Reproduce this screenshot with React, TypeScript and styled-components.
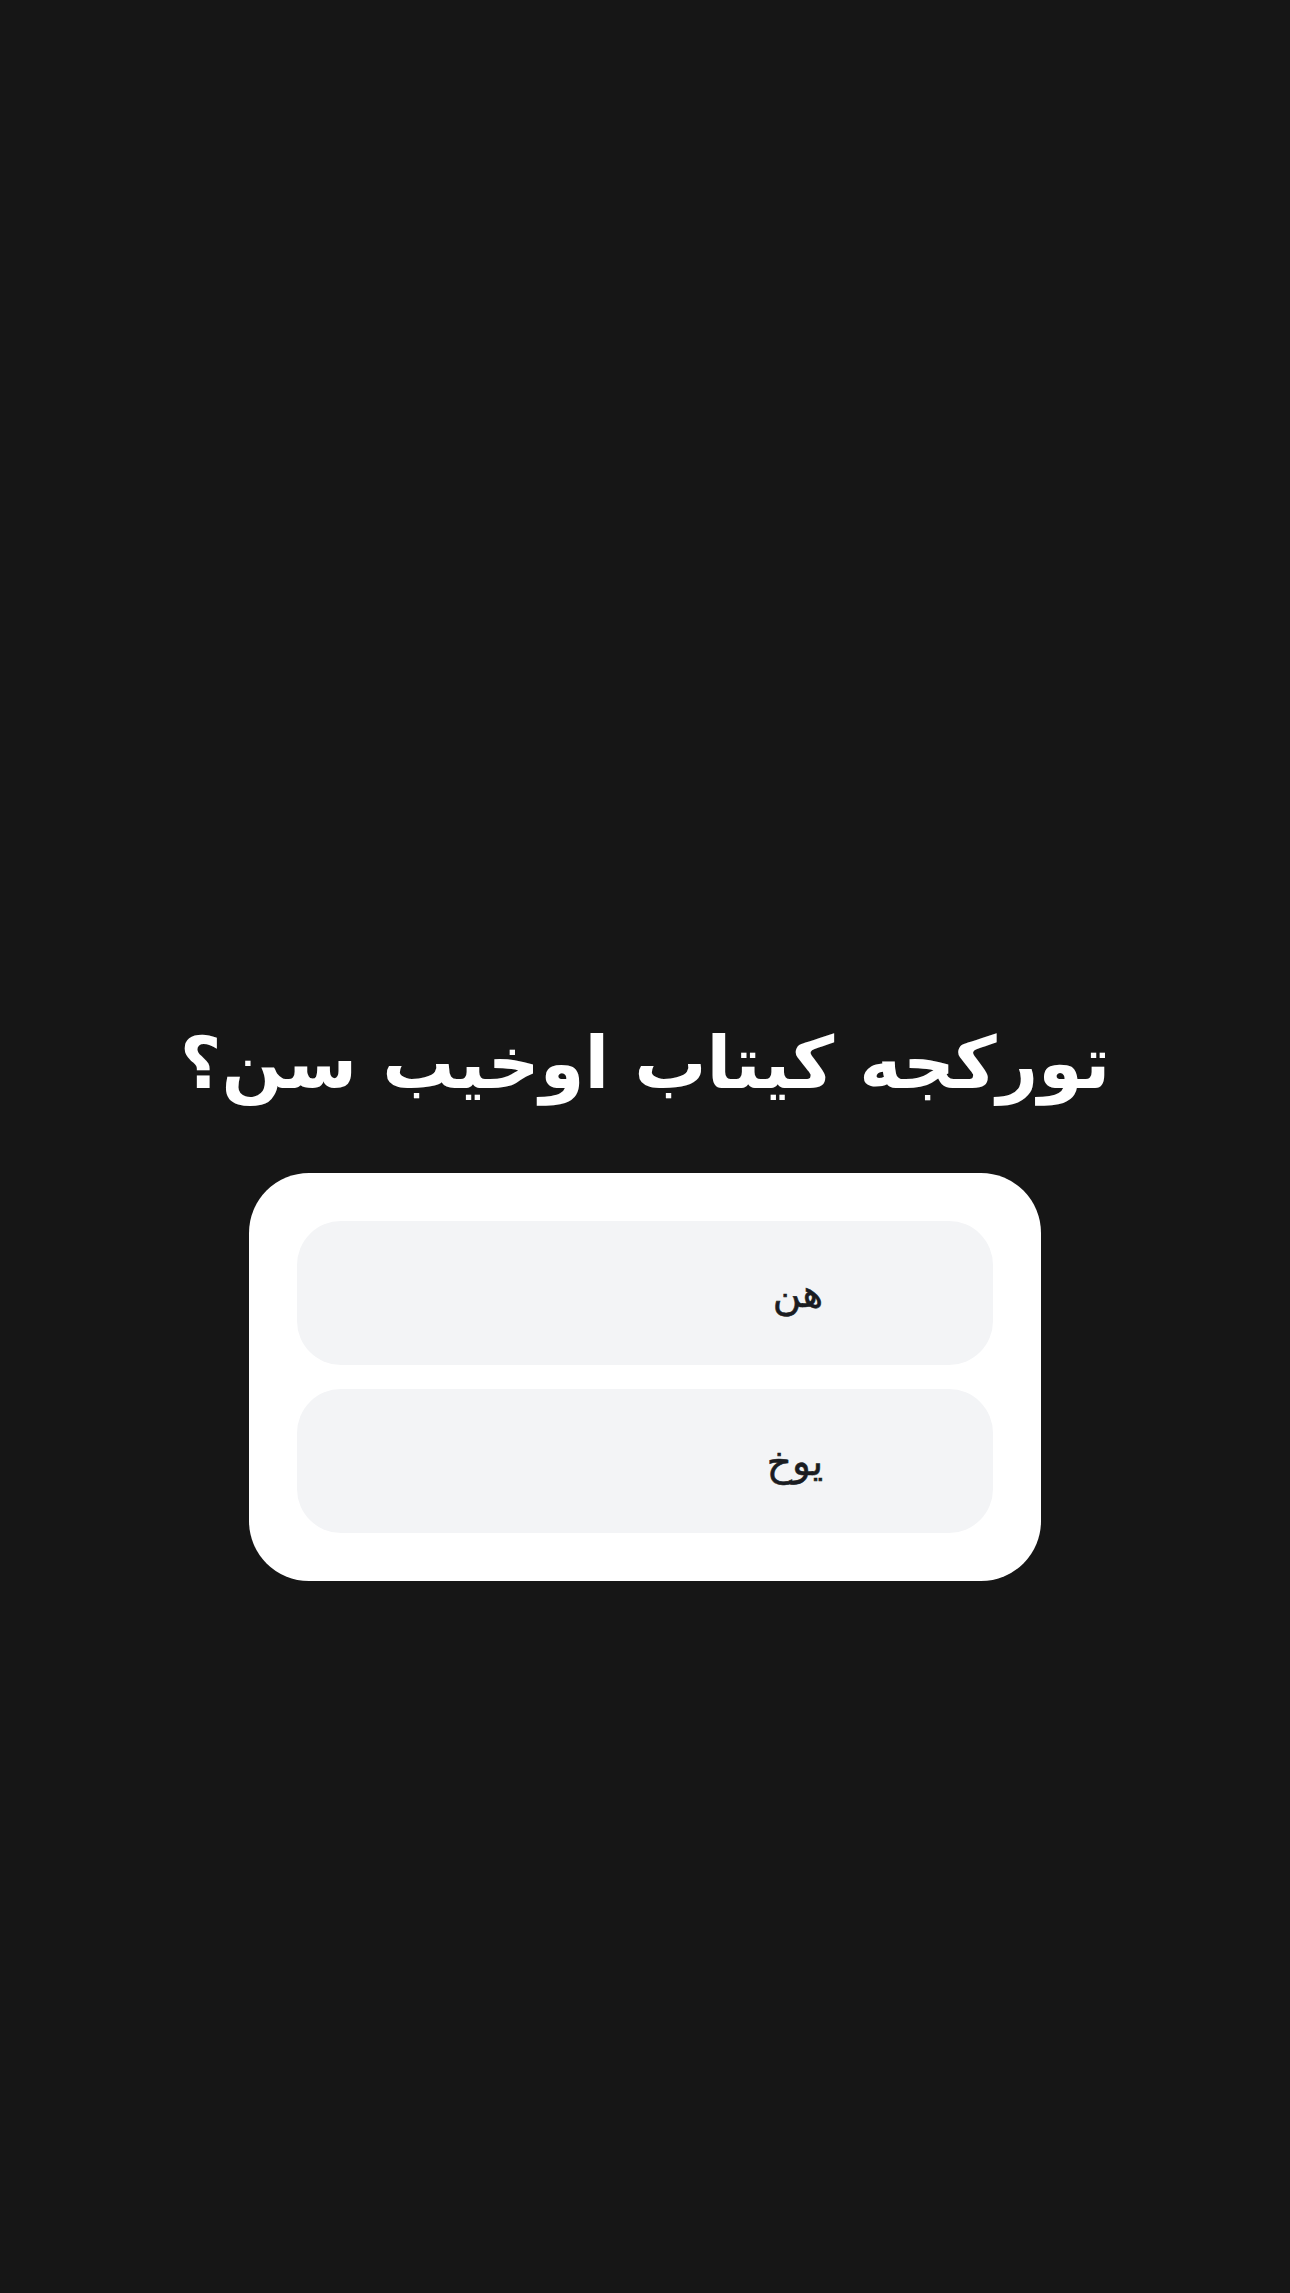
import React from "react";
import styled, { createGlobalStyle } from "styled-components";

const Global = createGlobalStyle`
  html, body { margin: 0; padding: 0; background: #161616; }
  body { font-family: "DejaVu Sans", "Noto Sans", sans-serif; }
`;

const Page = styled.div`
  min-height: 2293px;
  box-sizing: border-box;
  background: #161616;
  display: flex;
  flex-direction: column;
  align-items: center;
  padding-top: 1013px;
  direction: rtl;
`;

const Title = styled.h1`
  margin: 0 0 60px;
  color: #ffffff;
  font-family: "DejaVu Sans", sans-serif;
  font-weight: 700;
  font-size: 72px;
  line-height: 100px;
  text-align: center;
`;

const Card = styled.div`
  width: 792px;
  box-sizing: border-box;
  background: #ffffff;
  border-radius: 60px;
  padding: 48px;
  display: flex;
  flex-direction: column;
  gap: 24px;
`;

const Option = styled.button`
  height: 144px;
  border: none;
  border-radius: 44px;
  background: #f3f4f6;
  color: #1a1c21;
  font-family: "DejaVu Sans", sans-serif;
  font-size: 39px;
  font-weight: 400;
  -webkit-text-stroke: 0.6px #1a1c21;
  direction: rtl;
  text-align: right;
  padding: 0 170px 0 0;
  cursor: pointer;
`;

export default function App() {
  return (
    <>
      <Global />
      <Page>
        <Title>تورکجه کیتاب اوخیب سن؟</Title>
        <Card>
          <Option>هن</Option>
          <Option>یوخ</Option>
        </Card>
      </Page>
    </>
  );
}
